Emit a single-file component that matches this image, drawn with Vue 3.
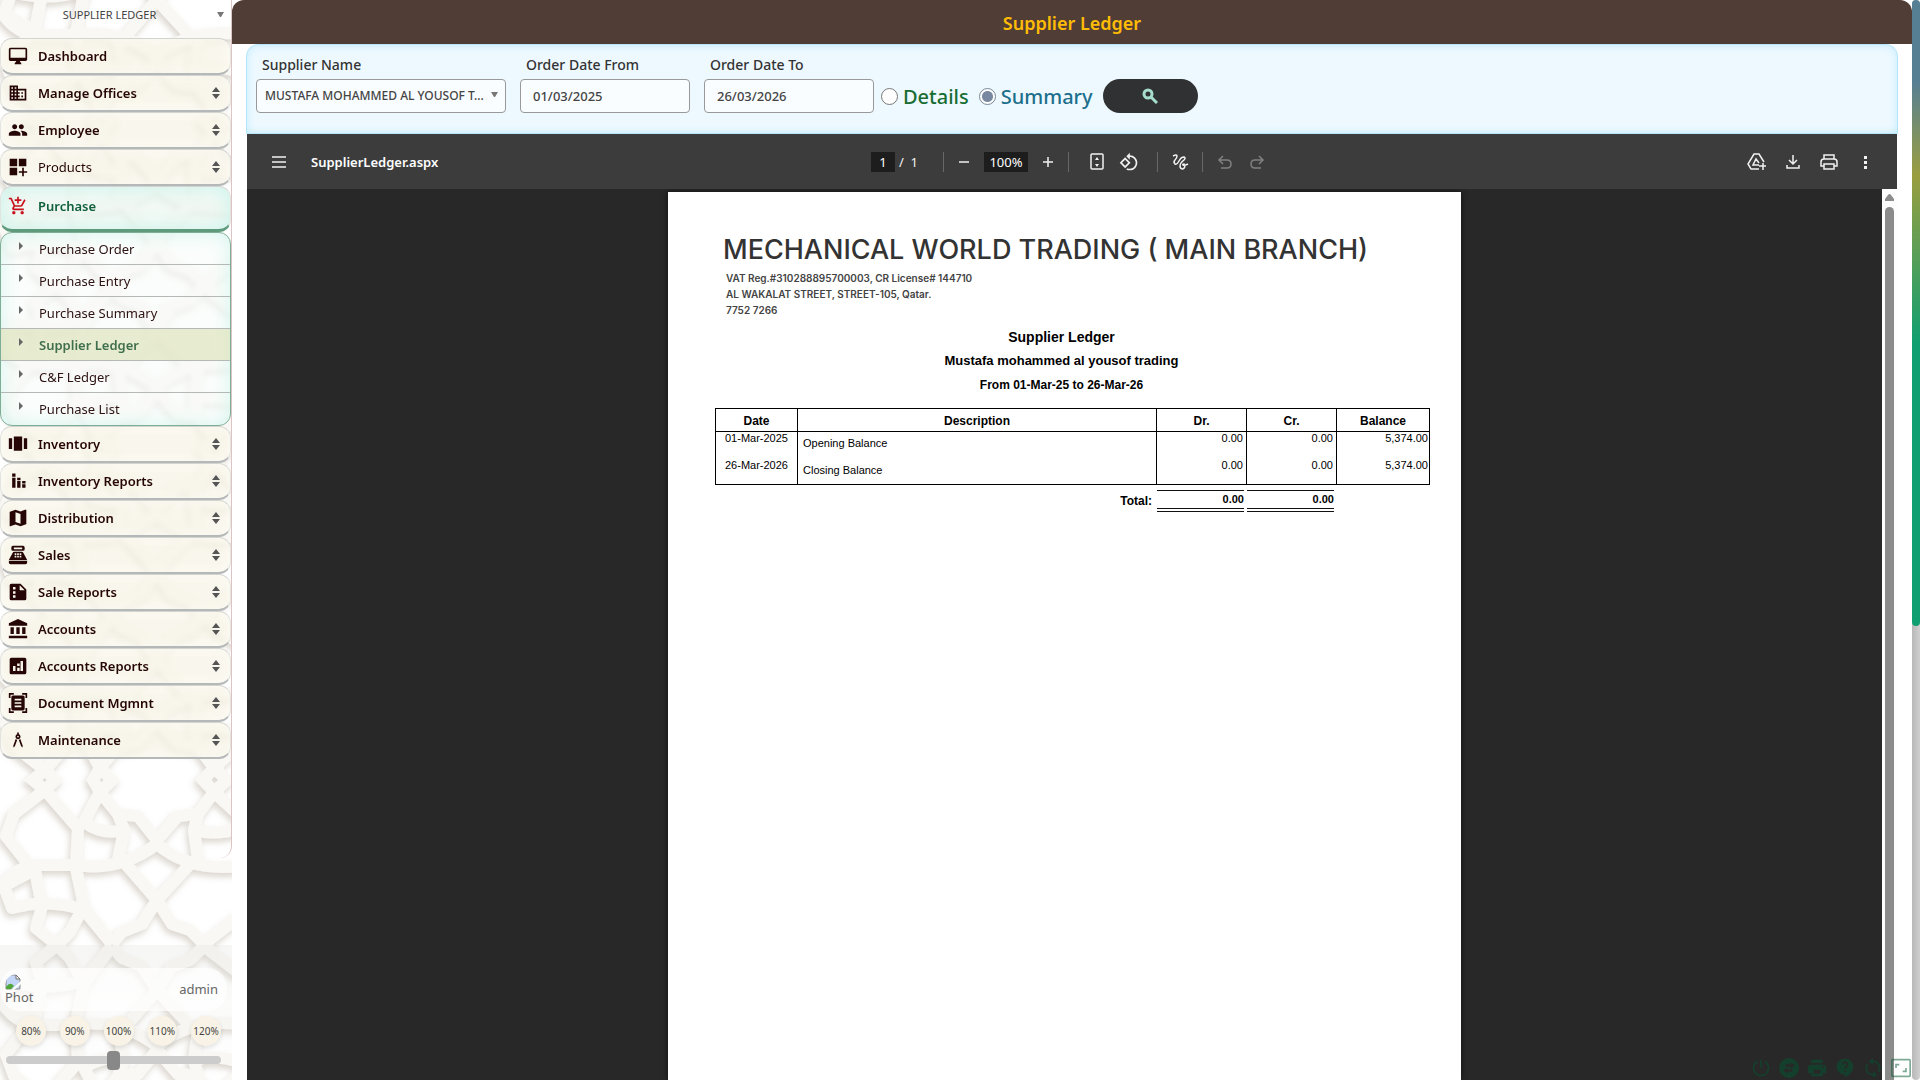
<template>
  <div class="app">
    <aside class="sidebar">
      <svg class="lattice" aria-hidden="true">
        <defs>
          <filter id="lift" x="-10%" y="-10%" width="120%" height="120%">
            <feDropShadow dx="-2" dy="4" stdDeviation="3" flood-color="#8a7c60" flood-opacity="0.3" />
          </filter>
          <g id="tile" fill="none" stroke="#faf8f4" stroke-width="12" stroke-linejoin="round">
            <path d="M12 0 16 16 45 40 78 78 76 118 84 156 112 194" />
            <path d="M78 0 72 14 45 40 14 64 6 86 30 116" />
            <path d="M92 0 84 14 100 42 122 20 122 0" />
            <path d="M100 42 84 72Q104 86 124 80L118 64 100 42M124 80 118 110" />
            <path d="M118 64 138 66 157 90 178 66 198 64 194 80 198 110" />
            <path d="M194 0 194 20 214 42 238 20M214 42 198 64M214 42 240 66M194 80Q216 86 240 78" />
            <path d="M0 140Q14 118 34 115H76Q120 122 157 94Q190 122 240 116" />
            <path d="M124 112 157 150 172 174 190 180 204 194 240 166" />
            <path d="M192 112 157 150 142 174 122 182 112 194M112 194 84 160Q50 148 12 158L4 136 34 120" />
            <path d="M34 115 42 156 36 178 57 195 70 182 84 156" />
          </g>
          <clipPath id="band"><rect x="-10" y="30" width="260" height="165" /></clipPath>
        </defs>
        <g filter="url(#lift)">
          <g v-for="t in tiles" :key="t" :transform="t"><use href="#tile" clip-path="url(#band)" /></g>
        </g>
      </svg>

      <nav class="menu">
        <select class="page-picker" aria-label="Page">
          <option>SUPPLIER LEDGER</option>
        </select>
        <template v-for="item in menu" :key="item.name">
          <button class="menu-item" :class="{ active: item.children, light: item.light }">
            <svg viewBox="0 0 24 24" class="menu-icon"><path :d="item.icon" fill-rule="evenodd" /></svg>
            <span class="menu-name">{{ item.name }}</span>
            <svg v-if="!item.single" viewBox="0 0 8 12" class="sorter"><path d="M0 5 4 0 8 5zM0 7H8L4 12z" /></svg>
          </button>
          <div v-if="item.children" class="submenu">
            <a v-for="child in item.children" :key="child" href="#" :class="{ current: child === title }">{{ child }}</a>
          </div>
        </template>
      </nav>

      <div class="side-foot">
        <div class="user">
          <span class="photo">
            <svg viewBox="0 0 16 16" width="16" height="16">
              <path d="M1 1H11L15 5V15H1z" fill="#c3d6f7" stroke="#8b8b8b" />
              <path d="M11 1V5H15z" fill="#fff" stroke="#6f6f6f" />
              <path d="M1 15V13Q5 7 9 12L6 15z" fill="#4fa63a" />
              <path d="M6 16 16 7V10L9 16z" fill="#fff" />
            </svg>
            Phot
          </span>
          <span class="user-name">admin</span>
        </div>
        <div class="zooms">
          <button v-for="z in zooms" :key="z">{{ z }}%</button>
        </div>
        <input v-model="zoom" class="zoom-range" type="range" min="80" max="120" aria-label="Zoom" />
      </div>
    </aside>

    <main class="main">
      <h1 class="title-bar">{{ title }}</h1>

      <form class="filters" @submit.prevent>
        <div class="field supplier">
          <label for="supplier">Supplier Name</label>
          <select id="supplier">
            <option>MUSTAFA MOHAMMED AL YOUSOF T...</option>
          </select>
        </div>
        <div class="field">
          <label for="from">Order Date From</label>
          <input id="from" v-model="dateFrom" type="text" />
        </div>
        <div class="field">
          <label for="to">Order Date To</label>
          <input id="to" v-model="dateTo" type="text" />
        </div>
        <div class="modes">
          <input id="details" v-model="mode" type="radio" value="details" />
          <label for="details" class="details">Details</label>
          <input id="summary" v-model="mode" type="radio" value="summary" />
          <label for="summary" class="summary">Summary</label>
        </div>
        <button class="search" aria-label="Search">
          <svg viewBox="0 0 16 16" width="16" height="16" fill="none" stroke="#a5dccb">
            <circle cx="6" cy="6" r="4" stroke-width="3" />
            <path d="M9 9 15 15" stroke-width="3" />
          </svg>
        </button>
      </form>

      <section class="viewer">
        <header class="toolbar">
          <div class="tool-left">
            <button aria-label="Menu"><svg viewBox="0 0 20 20"><path d="M3 5H17M3 10H17M3 15H17" /></svg></button>
            <span class="file-name">SupplierLedger.aspx</span>
          </div>
          <div class="tool-center">
            <input class="page-no" value="1" aria-label="Page number" />
            <span class="page-count">/&nbsp;&nbsp;1</span>
            <i class="sep"></i>
            <div class="zoom-tools">
              <button aria-label="Zoom out"><svg viewBox="0 0 20 20"><path d="M5 10H15" /></svg></button>
              <input class="zoom-value" value="100%" aria-label="Zoom level" />
              <button aria-label="Zoom in"><svg viewBox="0 0 20 20"><path d="M5 10H15M10 5V15" /></svg></button>
            </div>
            <i class="sep"></i>
            <div class="page-tools">
              <button aria-label="Fit to page">
                <svg viewBox="0 0 20 20"><rect x="4" y="2" width="12" height="15" rx="1" /><path d="M8 8 10 5 12 8zM8 12H12L10 15z" class="solid" /></svg>
              </button>
              <button aria-label="Rotate">
                <svg viewBox="0 0 24 24"><path class="solid" fill-rule="evenodd" d="M7.34 6.41L.86 12.9l6.49 6.48 6.49-6.48-6.5-6.49zM3.69 12.9l3.66-3.66L11 12.9l-3.66 3.66-3.65-3.66zm15.67-6.26C17.61 4.88 15.3 4 13 4V.76L8.76 5 13 9.24V6c1.79 0 3.58.68 4.95 2.05 2.73 2.73 2.73 7.17 0 9.9C16.58 19.32 14.79 20 13 20c-.97 0-1.94-.21-2.84-.61l-1.49 1.49C10.02 21.62 11.51 22 13 22c2.3 0 4.61-.88 6.36-2.64 3.52-3.51 3.52-9.21 0-12.72z" /></svg>
              </button>
            </div>
            <i class="sep"></i>
            <button aria-label="Draw">
              <svg viewBox="0 0 20 20"><path d="M3 4Q7 2 7 4Q7 6 5 8T5 12Q7 13 9 9T14 5Q16 6 14 8Q10 11 10 14T13 17Q16 15 14 12Q12 12 13 13T18 12" /></svg>
            </button>
            <i class="sep"></i>
            <button class="off" aria-label="Undo"><svg viewBox="0 0 20 20"><path d="M8 4 4 8 8 12M4 8H12Q16 8 16 12T12 16H6" /></svg></button>
            <button class="off" aria-label="Redo"><svg viewBox="0 0 20 20"><path d="M12 4 16 8 12 12M16 8H8Q4 8 4 12T8 16H14" /></svg></button>
          </div>
          <div class="tool-right">
            <button aria-label="Save to Drive">
              <svg viewBox="0 0 20 20"><path d="M12 17H4L1 12 7 2H12L17 10M12 13H6L9 7 12 11M16 11V18M12 14H19" /></svg>
            </button>
            <button aria-label="Download"><svg viewBox="0 0 20 20"><path d="M10 3V12M6 8 10 12 14 8M4 13V16H16V13" /></svg></button>
            <button aria-label="Print">
              <svg viewBox="0 0 20 20"><path d="M5 7V3H15V7M5 14H2V10Q2 7 5 7H15Q18 7 18 10V14H15M5 12H15V17H5z" /></svg>
            </button>
            <button aria-label="More">
              <svg viewBox="0 0 20 20"><path class="solid" d="M9 4h3v3H9zM9 9h3v3H9zM9 14h3v3H9z" /></svg>
            </button>
          </div>
        </header>

        <div class="canvas">
          <div class="stage">
            <article class="sheet">
              <h2 class="company">MECHANICAL WORLD TRADING ( MAIN BRANCH)</h2>
              <p class="contact">
                VAT Reg.#310288895700003, CR License# 144710<br />
                AL WAKALAT STREET, STREET-105, Qatar.<br />
                7752 7266
              </p>
              <div class="doc-titles">
                <h3>Supplier Ledger</h3>
                <p class="party">Mustafa mohammed al yousof trading</p>
                <p class="period">From 01-Mar-25 to 26-Mar-26</p>
              </div>
              <table class="ledger">
                <colgroup>
                  <col class="c-date" /><col /><col class="c-num" /><col class="c-num" /><col class="c-balance" />
                </colgroup>
                <thead>
                  <tr><th>Date</th><th>Description</th><th>Dr.</th><th>Cr.</th><th class="balance">Balance</th></tr>
                </thead>
                <tbody>
                  <tr v-for="row in rows" :key="row.date">
                    <td class="date">{{ row.date }}</td>
                    <td class="desc">{{ row.text }}</td>
                    <td class="num">{{ row.dr }}</td>
                    <td class="num">{{ row.cr }}</td>
                    <td class="num balance">{{ row.balance }}</td>
                  </tr>
                </tbody>
                <tfoot>
                  <tr>
                    <td></td>
                    <td class="total">Total:</td>
                    <td><span class="sum">0.00</span></td>
                    <td><span class="sum">0.00</span></td>
                    <td></td>
                  </tr>
                </tfoot>
              </table>
            </article>
          </div>
          <div class="scroll-inner">
            <svg viewBox="0 0 9 7" width="9" height="7"><path d="M0 7V5L3 1Q4.500-1 6 1L9 5V7z" fill="#8b8b8b" /></svg>
            <span class="thumb"></span>
          </div>
        </div>
      </section>
    </main>

    <div class="scroll-outer"><span></span></div>

    <div class="quick">
      <button v-for="q in quick" :key="q.name" :aria-label="q.name">
        <svg viewBox="0 0 24 24"><path :d="q.icon" fill-rule="evenodd" /></svg>
      </button>
    </div>
  </div>
</template>

<script setup>
import { ref } from 'vue';

const title = 'Supplier Ledger';
const dateFrom = ref('01/03/2025');
const dateTo = ref('26/03/2026');
const mode = ref('summary');
const zoom = ref(100);
const zooms = [80, 90, 100, 110, 120];

// the lattice repeats by mirroring one 165px band up and down
const tiles = [-45, 120, 285, 450, 615, 780, 945].map((y, i) =>
  i % 2 ? `translate(0 ${y - 30})` : `translate(0 ${y + 195}) scale(1 -1)`
);

const menu = [
  { name: 'Dashboard', single: true, icon: 'M21 2H3c-1.100 0-2 .9-2 2v12c0 1.100.9 2 2 2h7l-2 3v1h8v-1l-2-3h7c1.100 0 2-.9 2-2V4c0-1.100-.9-2-2-2zm0 12H3V4h18v10z' },
  { name: 'Manage Offices', icon: 'M12 7V3H2v18h20V7H12zM6 19H4v-2h2v2zm0-4H4v-2h2v2zm0-4H4V9h2v2zm0-4H4V5h2v2zm4 12H8v-2h2v2zm0-4H8v-2h2v2zm0-4H8V9h2v2zm0-4H8V5h2v2zm10 12h-8v-2h2v-2h-2v-2h2v-2h-2V9h8v10zm-2-8h-2v2h2v-2zm0 4h-2v2h2v-2z' },
  { name: 'Employee', icon: 'M16 11c1.660 0 2.990-1.340 2.990-3S17.660 5 16 5c-1.660 0-3 1.340-3 3s1.340 3 3 3zm-8 0c1.660 0 2.990-1.340 2.990-3S9.660 5 8 5C6.340 5 5 6.340 5 8s1.340 3 3 3zm0 2c-2.330 0-7 1.170-7 3.500V19h14v-2.500c0-2.330-4.670-3.500-7-3.500zm8 0c-.29 0-.62.02-.97.05 1.160.84 1.970 1.970 1.970 3.450V19h6v-2.500c0-2.330-4.670-3.500-7-3.500z' },
  { name: 'Products', light: true, icon: 'M2 2h9v9H2zM13 2h9v9h-9zM2 13h9v9H2zM19 13h-2v4h-4v2h4v4h2v-4h4v-2h-4z' },
  {
    name: 'Purchase',
    single: true,
    icon: 'M11 9h2V6h3V4h-3V1h-2v3H8v2h3v3zm-4 9c-1.100 0-1.990.9-1.990 2S5.900 22 7 22s2-.9 2-2-.9-2-2-2zm10 0c-1.100 0-1.990.9-1.990 2s.89 2 1.990 2 2-.9 2-2-.9-2-2-2zm-9.830-3.250l.03-.12.9-1.630h7.450c.75 0 1.410-.41 1.750-1.030l3.860-7.010L19.420 4h-.01l-1.100 2-2.760 5H8.530l-.13-.27L6.160 6l-.95-2-.94-2H1v2h2l3.600 7.590-1.350 2.450c-.16.28-.25.61-.25.96 0 1.100.9 2 2 2h12v-2H7.420c-.13 0-.25-.11-.25-.25z',
    children: ['Purchase Order', 'Purchase Entry', 'Purchase Summary', 'Supplier Ledger', 'C&F Ledger', 'Purchase List'],
  },
  { name: 'Inventory', icon: 'M7 20h10V3H7v17zm-6-2h4V5H1v13zM19 5v13h4V5h-4z' },
  { name: 'Inventory Reports', icon: 'M5 3h4v4H5zM5 8h4v12H5zM11 8h4v3h-4zM11 12h4v8h-4zM17 12h4v3h-4zM17 16h4v4h-4z' },
  { name: 'Distribution', icon: 'M20.500 2l-.16.03L15 4.100 9 2 2.360 4.400c-.21.07-.36.25-.36.48V21.500c0 .28.22.5.5.5l.16-.03L9 19.900l6 2.100 6.640-2.400c.21-.07.36-.25.36-.48V2.500c0-.28-.22-.5-.5-.5zM15 19l-6-2.110V5l6 2.110V19z' },
  { name: 'Sales', icon: 'M18 1H6Q4 1 4 3V5Q4 7 6 7H18Q20 7 20 5V3Q20 1 18 1zM17 5H7V3H17zM1 19H23V21Q23 23 21 23H3Q1 23 1 21zM18.500 9.500Q18 8 16.500 8H7.500Q6 8 5.500 9.500L1 18H23zM8 10h2v2H8zM11 10h2v2h-2zM14 10h2v2h-2zM8 13h2v2H8zM11 13h2v2h-2zM14 13h2v2h-2z' },
  { name: 'Sale Reports', icon: 'M15 2H4Q2 2 2 4V20Q2 22 4 22H20Q22 22 22 20V9zM6 6h3v3H6zM6 11h3v3H6zM6 16h3v3H6zM14 10V4L20 10z' },
  { name: 'Accounts', icon: 'M3 10v8h4v-8H3zm7 0v8h4v-8h-4zM1 23h22v-3H1v3zM17 10v8h4v-8h-4zM12 0L1 5v3h22V5z' },
  { name: 'Accounts Reports', icon: 'M20 2H4Q2 2 2 4V20Q2 22 4 22H20Q22 22 22 20V4Q22 2 20 2zM9 18H6v-6h3zM14 18h-3v-4h3zM14 12h-3V9h3zM18 18h-3V6h3z' },
  { name: 'Document Mgmnt', icon: 'M7 2H3v4H1V0h6zM23 6V0h-6v2h4v4zM7 22H3v-4H1v6h6zM21 18v4h-4v2h6v-6zM20 19Q20 21 18 21H6Q4 21 4 19V5Q4 3 6 3H18Q20 3 20 5zM16 7H8v2h8zM16 11H8v2h8zM16 15H8v2h8z' },
  { name: 'Maintenance', icon: 'M6.360 18.780L6.610 21l1.620-1.540 2.770-7.600c-.68-.17-1.280-.51-1.770-.98l-2.870 7.900zm8.410-7.900c-.49.47-1.100.81-1.770.98l2.770 7.600L17.390 21l.26-2.220-2.880-7.900zM15 8c0-1.300-.84-2.400-2-2.820V3h-2v2.180C9.840 5.600 9 6.700 9 8c0 1.660 1.340 3 3 3s3-1.340 3-3zm-3 1c-.55 0-1-.45-1-1s.45-1 1-1 1 .45 1 1-.45 1-1 1z' },
];

const rows = [
  { date: '01-Mar-2025', text: 'Opening Balance', dr: '0.00', cr: '0.00', balance: '5,374.00' },
  { date: '26-Mar-2026', text: 'Closing Balance', dr: '0.00', cr: '0.00', balance: '5,374.00' },
];

const quick = [
  { name: 'Log out', icon: 'M13 2h-2v10h2zM17 3l-1 2C18.500 6.500 20 9 20 12c0 4.500-3.500 8-8 8s-8-3.500-8-8c0-3 1.500-5.500 4-7L7 3C4 4.800 2 8 2 12c0 5.500 4.500 10 10 10s10-4.500 10-10c0-4-2-7.200-5-9z' },
  { name: 'Switch', icon: 'M12 0A12 12 0 1 0 12 24A12 12 0 1 0 12 0zM14 5 19 9 14 13V10.500H8V7.500H14zM10 11 5 15 10 19V16.500H16V13.500H10z' },
  { name: 'Print', icon: 'M20 8H4Q1 8 1 11V18H5V22H19V18H23V11Q23 8 20 8zM16 19H8v-5h8zM20 12h-2v-2h2zM19 2H5V6H19z' },
  { name: 'Help', icon: 'M12 1C6.500 1 2 5 2 10.500S6.500 20 12 20v3c5-2 10-7 10-12.500C22 5 17.500 1 12 1zm1 16h-2v-2h2zm0-4h-2c0-3.250 3-3 3-5 0-1.100-.9-2-2-2s-2 .9-2 2H8c0-2.210 1.790-4 4-4s4 1.790 4 4c0 2.500-3 2.750-3 5z' },
  { name: 'Refresh', icon: 'M12 3V0L7 4l5 4V5c4 0 7 3 7 7 0 1.500-.4 2.700-1 3.700l1.600 1.600C20.500 15.800 21 14 21 12c0-5-4-9-9-9zm0 16c-4 0-7-3-7-7 0-1.500.4-2.700 1-3.700L4.400 6.700C3.500 8.200 3 10 3 12c0 5 4 9 9 9v3l5-4-5-4z' },
  { name: 'Full screen', icon: 'M19 12h-2v3h-3v2h5v-5zM7 9h3V7H5v5h2V9zM22 1H2Q0 1 0 3V21Q0 23 2 23H22Q24 23 24 21V3Q24 1 22 1zM22 21H2V3H22z' },
];
</script>

<style>
body {
  margin: 0;
  background: #fff;
}
</style>

<style scoped>
.app {
  display: flex;
  height: 100vh;
  overflow: hidden;
  position: relative;
  font-family: "Noto Sans", "Open Sans", sans-serif;
  color: #333;
}

button, input, select {
  font-family: inherit;
  margin: 0;
}

button {
  border: none;
  padding: 0;
  background: none;
  cursor: pointer;
}

/* Sidebar */
.sidebar {
  position: relative;
  width: 232px;
  flex-shrink: 0;
  display: flex;
  flex-direction: column;
  overflow: hidden;
}

.lattice {
  position: absolute;
  top: 0;
  left: 0;
  width: 100%;
  height: 100%;
}

.menu {
  position: relative;
  flex: 1;
  margin-bottom: 87px;
  border-right: 1px solid #dcc4c4;
  border-radius: 0 0 12px 0;
}

.page-picker, .supplier select {
  appearance: none;
  background: url("data:image/svg+xml,%3Csvg xmlns='http://www.w3.org/2000/svg' width='7' height='5'%3E%3Cpath d='M0 0H7L4 5H3z' fill='%23777'/%3E%3C/svg%3E") no-repeat;
}

.page-picker {
  display: block;
  width: 100%;
  height: 38px;
  border: none;
  padding: 0 20px 10px 8px;
  background-position: right 7px top 12px;
  text-align: center;
  text-align-last: center;
  font-size: 11px;
  color: #444;
}

.menu-item {
  display: flex;
  align-items: center;
  width: 100%;
  height: 37px;
  padding: 0 10px 0 7px;
  border: 1px solid #d0d0d0;
  border-width: 1px 1px 2px;
  border-color: #d3d3d0 #e3e3e0 #b5b8b8;
  border-radius: 12px;
  background: rgba(247, 243, 230, 0.7);
  backdrop-filter: blur(2px);
  box-shadow: inset 0 0 12px rgba(255, 255, 250, 0.6);
  font-size: 13px;
  font-weight: 600;
  color: #250505;
}

.menu-item.light {
  font-weight: 400;
}

.menu-icon {
  width: 20px;
  height: 20px;
  fill: #250505;
}

.menu-name {
  flex: 1;
  margin-left: 10px;
  text-align: left;
}

.sorter {
  width: 8px;
  height: 12px;
  fill: #555;
}

.menu-item.active {
  height: 46px;
  padding-bottom: 4px;
  border-bottom: 3px solid #5f9a7c;
  background: rgba(236, 246, 241, 0.7);
  box-shadow: inset 0 0 20px #c9f3ea;
  color: #10603c;
}

.active .menu-icon {
  fill: #c8101c;
}

.submenu {
  border: 1px solid #7fae97;
  border-radius: 12px;
  overflow: hidden;
  backdrop-filter: blur(2px);
  background: rgba(248, 252, 250, 0.6);
  box-shadow: inset 0 0 20px #d5f5ee;
}

.submenu a {
  display: flex;
  align-items: center;
  box-sizing: border-box;
  height: 32px;
  padding-left: 18px;
  border-bottom: 1px solid #b4b8b6;
  font-size: 13px;
  color: #2c1212;
  text-decoration: none;
}

.submenu a:last-child {
  border-bottom: none;
}

.submenu a::before {
  content: "";
  margin: 0 16px 6px 0;
  border: solid transparent;
  border-width: 4px 0 4px 4px;
  border-left-color: #666;
}

.submenu a.current {
  background: rgba(224, 228, 190, 0.7);
  font-weight: 600;
  color: #3f6f4c;
}

.side-foot {
  position: relative;
  height: 135px;
  box-sizing: border-box;
  padding-top: 23px;
  background: linear-gradient(rgba(225, 225, 222, 0.3), rgba(255, 255, 255, 0) 90%);
}

.user {
  display: flex;
  align-items: center;
  justify-content: space-between;
  box-sizing: border-box;
  height: 43px;
  margin-right: 5px;
  padding: 0 9px 2px 5px;
  border-radius: 20px;
  background: rgba(255, 255, 255, 0.7);
  color: #666;
}

.photo {
  font-size: 13px;
  line-height: 14px;
}

.photo svg {
  display: block;
  border-radius: 12px 0 0 0;
}

.user-name {
  font-size: 13px;
}

.zooms {
  display: flex;
  justify-content: space-between;
  padding: 5px 11px 0 16px;
}

.zooms button {
  width: 30px;
  height: 30px;
  border-radius: 50%;
  background: #f8f3e6;
  box-shadow: 0 2px 5px rgba(0, 0, 0, 0.12);
  font-size: 10px;
  color: #444;
  white-space: nowrap;
  display: flex;
  align-items: center;
  justify-content: center;
}

.zoom-range {
  appearance: none;
  display: block;
  width: calc(100% - 17px);
  height: 8px;
  margin: 10px 11px 0 6px;
  border-radius: 4px;
  background: #ccc;
}

.zoom-range::-webkit-slider-thumb {
  appearance: none;
  width: 13px;
  height: 19px;
  border-radius: 4px;
  background: #888;
}

/* Main */
.main {
  flex: 1;
  min-width: 0;
  display: flex;
  flex-direction: column;
}

.title-bar {
  height: 44px;
  margin: 0;
  background: #4f3d36;
  border-radius: 12px 12px 0 0;
  text-align: center;
  font-size: 18px;
  line-height: 46px;
  font-weight: 600;
  color: #ffbc05;
}

.filters {
  display: flex;
  align-items: flex-end;
  box-sizing: border-box;
  height: 90px;
  margin: 0 14px;
  padding: 0 9px 20px;
  border: 1px solid #b5e6fb;
  border-radius: 12px 12px 0 0;
  background: #eef9ff;
  box-shadow: inset 0 0 8px #bfeafd;
}

.field {
  display: flex;
  flex-direction: column;
  margin-right: 14px;
}

.field label {
  padding-left: 6px;
  margin-bottom: 4px;
  font-size: 14px;
  line-height: 20px;
  font-weight: 500;
}

.field input, .field select {
  box-sizing: border-box;
  width: 170px;
  height: 34px;
  padding: 0 12px;
  border: 1px solid #999;
  border-radius: 4px;
  background-color: #f9fdff;
  font-size: 13px;
  font-weight: 500;
  color: #444;
}

.supplier select {
  width: 250px;
  padding: 0 16px 2px 8px;
  background-position: right 7px top 12px;
  font-size: 12px;
}

.modes {
  display: flex;
  align-items: center;
  height: 34px;
  margin-left: -7px;
}

.modes input {
  appearance: none;
  width: 17px;
  height: 17px;
  border: 1px solid #777;
  border-radius: 50%;
  background: #fff;
}

.modes input:checked {
  border-color: #778899;
  background: radial-gradient(#7788a0 5px, #fff 6px);
}

.modes label {
  margin: 0 10px 0 5px;
  font-size: 20px;
  font-weight: 500;
}

.details {
  color: #176d33;
}

.summary {
  color: #1c6f8b;
}

.search {
  width: 95px;
  height: 34px;
  border-radius: 17px;
  background: #2f3133;
}

.search svg {
  display: block;
  margin: auto;
}

/* Document viewer */
.viewer {
  flex: 1;
  min-height: 0;
  display: flex;
  flex-direction: column;
  margin: 0 15px;
}

.toolbar {
  display: flex;
  align-items: center;
  height: 55px;
  flex-shrink: 0;
  background: #3c3c3c;
  color: #f1f1f1;
  font-size: 14px;
}

.tool-left, .tool-right {
  flex: 1;
  display: flex;
  align-items: center;
}

.tool-left {
  padding-left: 22px;
}

.tool-right {
  justify-content: flex-end;
  gap: 16px;
  padding-right: 22px;
}

.file-name {
  margin-left: 22px;
  font-size: 13px;
  font-weight: 600;
  color: #fff;
}

.toolbar svg {
  display: block;
  width: 20px;
  height: 20px;
  fill: none;
  stroke: #f1f1f1;
  stroke-width: 1.5;
}

.toolbar .solid {
  fill: #f1f1f1;
  stroke: none;
}

.toolbar .off svg {
  stroke: #808080;
}

.tool-center {
  display: flex;
  align-items: center;
  gap: 12px;
  padding-right: 6px;
}

.zoom-tools {
  display: flex;
  gap: 10px;
  margin: 0 -2px;
}

.page-tools {
  display: flex;
  gap: 12px;
  margin: 0 6px;
}

.tool-center input {
  box-sizing: border-box;
  height: 20px;
  padding: 0;
  border: none;
  background: #1d1d1d;
  text-align: center;
  font-size: 13px;
  color: #fff;
}

.tool-center .page-no {
  width: 24px;
}

.tool-center .zoom-value {
  width: 44px;
}

.page-count {
  width: 32px;
  margin-left: -8px;
  font-size: 13px;
}

.sep {
  width: 1px;
  height: 20px;
  background: #686868;
}

.canvas {
  flex: 1;
  min-height: 0;
  display: flex;
  background: #282828;
}

.stage {
  flex: 1;
  display: flex;
  justify-content: center;
  overflow: hidden;
  padding-top: 3px;
}

.sheet {
  width: 793px;
  box-sizing: border-box;
  min-height: 100%;
  padding: 40px 31px 0 47px;
  background: #fff;
  box-shadow: 0 0 6px #111;
  font-family: "Liberation Sans", Arial, sans-serif;
  color: #000;
}

.company {
  margin: 0 0 0 8px;
  font-family: Inter, sans-serif;
  font-size: 27px;
  line-height: 36px;
  font-weight: 500;
  color: #333;
  white-space: nowrap;
}

.contact {
  margin: 2px 0 0 11px;
  font-family: Inter, sans-serif;
  font-size: 10px;
  line-height: 16px;
  font-weight: 600;
  color: #444;
}

.doc-titles {
  margin: 7px 22px 0 0;
  text-align: center;
}

.doc-titles h3, .doc-titles p {
  margin: 0;
  line-height: 24px;
  font-weight: 700;
}

.doc-titles h3 {
  font-size: 14px;
}

.party {
  font-size: 13px;
}

.period {
  font-size: 12px;
}

.ledger {
  width: 100%;
  margin-top: 11px;
  table-layout: fixed;
  border-collapse: separate;
  border-spacing: 0;
  font-size: 11px;
}

.c-date {
  width: 82px;
}

.c-num {
  width: 90px;
}

.c-balance {
  width: 94px;
}

.ledger th {
  height: 20px;
  padding: 2px 0 0;
  border: solid #000;
  border-width: 1px 0 1px 1px;
  font-size: 12px;
}

.ledger tbody td {
  box-sizing: border-box;
  height: 27px;
  padding: 0;
  border-left: 1px solid #000;
  vertical-align: top;
  line-height: 13px;
}

.ledger tbody tr:last-child td {
  height: 26px;
  border-bottom: 1px solid #000;
}

.ledger th.balance, .ledger td.balance {
  border-right: 1px solid #000;
}

.ledger .date {
  text-align: center;
}

.ledger tbody .desc {
  padding: 5px 0 0 5px;
}

.ledger tbody .num {
  padding-right: 3px;
  text-align: right;
}

.ledger tbody .balance {
  padding-right: 1px;
}

.ledger tfoot td {
  padding: 5px 2px 0 1px;
  font-weight: 700;
}

.ledger tfoot .total {
  padding-right: 4px;
  text-align: right;
  font-size: 12px;
}

.sum {
  display: block;
  border-top: 1px solid #111;
  border-bottom: 4px double #111;
  text-align: right;
  line-height: 17px;
}

.scroll-inner {
  display: flex;
  flex-direction: column;
  align-items: center;
  width: 15px;
  padding-top: 5px;
  box-sizing: border-box;
  background: #fdfdfd;
}

.thumb {
  flex: 1;
  width: 9px;
  margin-top: 6px;
  border-radius: 5px 5px 0 0;
  background: #8b8b8b;
}

.scroll-outer {
  width: 8px;
  border-radius: 4px;
  background: linear-gradient(90deg, #b8b8b8, #cfcfcf);
}

.scroll-outer span {
  display: block;
  height: 58%;
  border-radius: 4px;
  background: linear-gradient(#567f94 13%, #9a9e40 28%, #0f9f70 55%);
}

.quick {
  position: absolute;
  right: 9px;
  bottom: 2px;
  display: flex;
  gap: 8px;
  opacity: 0.5;
}

.quick svg {
  display: block;
  width: 20px;
  height: 20px;
  fill: #025632;
}
</style>
